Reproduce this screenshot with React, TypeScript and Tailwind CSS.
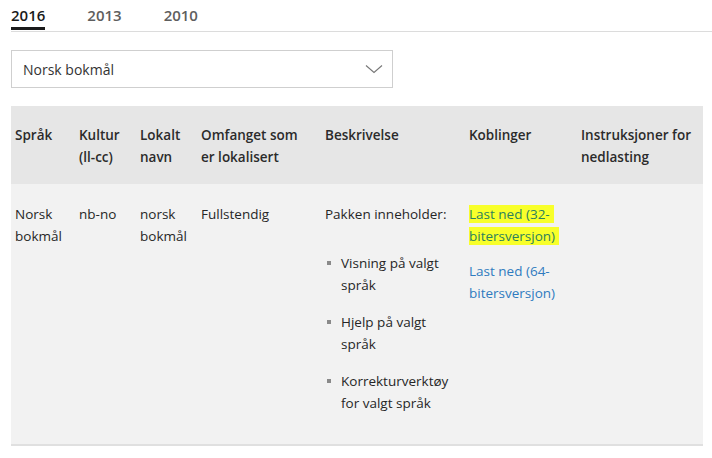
import React from 'react';

const font = { fontFamily: '"Open Sans", "Noto Sans", sans-serif' };

const cols = 'grid grid-cols-[64px_61px_61px_124px_144px_112px_126px]';

const headers = ['Språk', 'Kultur (ll-cc)', 'Lokalt navn', 'Omfanget som er lokalisert', 'Beskrivelse', 'Koblinger', 'Instruksjoner for nedlasting'];

const items = ['Visning på valgt språk', 'Hjelp på valgt språk', 'Korrekturverktøy for valgt språk'];

export default function App() {
  return (
    <div className="w-[712px] h-[458px] bg-white text-[#262626] overflow-hidden" style={font}>
      {/* Tabs */}
      <div className="ml-[11px] flex gap-[42px] border-b border-[#dcdcdc] h-[32px]">
        <div className="relative pt-[4px] text-[15px] font-semibold leading-[22px] text-[#1a1a1a]">
          2016
          <div className="absolute left-0 right-0 top-[27px] h-[3px] bg-[#1a1a1a]" />
        </div>
        <div className="pt-[4px] text-[15px] font-semibold leading-[22px] text-[#5e5e5e]">2013</div>
        <div className="pt-[4px] text-[15px] font-semibold leading-[22px] text-[#5e5e5e]">2010</div>
      </div>

      {/* Language select */}
      <div className="mt-[18px] ml-[11px] w-[382px] h-[38px] border border-[#cfcfcf] flex items-center justify-between pl-[11px] pr-[9px]">
        <span className="text-[14px] text-[#333]">Norsk bokmål</span>
        <svg width="18" height="10" viewBox="0 0 18 10" fill="none" stroke="#777" strokeWidth="1.1">
          <path d="M1 1.5 9 8.5 17 1.5" />
        </svg>
      </div>

      {/* Table */}
      <div className="mt-[18px] ml-[11px] w-[692px] text-[13.5px] leading-[22px]">
        <div className={`${cols} bg-[#e6e6e6] pt-[18px] pb-[16px] font-semibold text-[#2b2b2b]`}>
          {headers.map((h, i) => (
            <div key={h} className={i === 3 ? 'pl-[4px] pr-[16px]' : 'pl-[4px] pr-[6px]'}>{h}</div>
          ))}
        </div>
        <div className={`${cols} bg-[#f2f2f2] pt-[19px] pb-[30px] border-b-2 border-[#e0e0e0]`}>
          <div className="pl-[4px] pr-[4px]">Norsk bokmål</div>
          <div className="pl-[4px]">nb-no</div>
          <div className="pl-[4px] pr-[4px]">norsk bokmål</div>
          <div className="pl-[4px]">Fullstendig</div>
          <div className="pl-[4px] pr-[4px]">
            <p>Pakken inneholder:</p>
            <ul className="mt-[27px] flex flex-col gap-[15px]">
              {items.map((t) => (
                <li key={t} className="relative pl-[16px]">
                  <span className="absolute left-[2px] top-[9px] w-[4px] h-[4px] bg-[#8a8a8a]" />
                  {t}
                </li>
              ))}
            </ul>
          </div>
          <div className="pl-[4px] pr-[8px]">
            <p>
              <span className="bg-[#f8ff2a] text-[#2c7f5e] pr-[4px] [box-decoration-break:clone]">Last ned (32-bitersversjon)</span>
            </p>
            <p className="mt-[13px] text-[#2f7bbf]">Last ned (64-bitersversjon)</p>
          </div>
          <div />
        </div>
      </div>
    </div>
  );
}
